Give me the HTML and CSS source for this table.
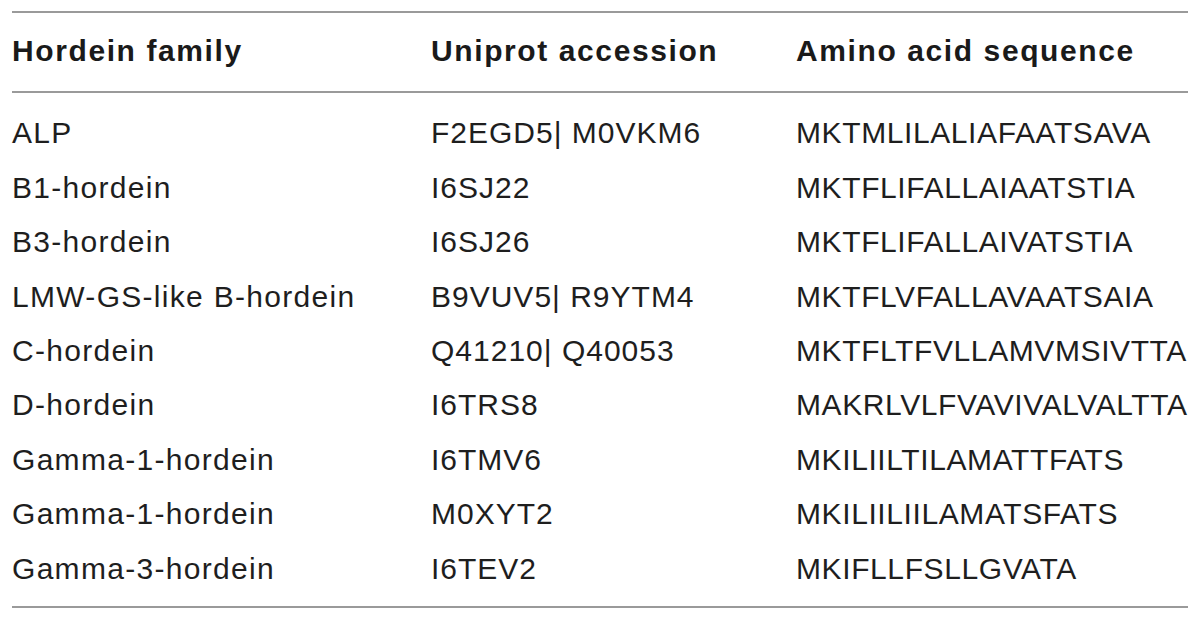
FILE: index.html
```html
<!DOCTYPE html>
<html lang="en">
<head>
<meta charset="utf-8">
<title>Hordein signal peptides</title>
<link rel="stylesheet" href="styles.css">
</head>
<body>
<table class="data">
  <colgroup>
    <col class="c1">
    <col class="c2">
    <col class="c3">
  </colgroup>
  <thead>
    <tr>
      <th>Hordein family</th>
      <th>Uniprot accession</th>
      <th>Amino acid sequence</th>
    </tr>
  </thead>
  <tbody>
    <tr><td>ALP</td><td>F2EGD5| M0VKM6</td><td>MKTMLILALIAFAATSAVA</td></tr>
    <tr><td>B1-hordein</td><td>I6SJ22</td><td>MKTFLIFALLAIAATSTIA</td></tr>
    <tr><td>B3-hordein</td><td>I6SJ26</td><td>MKTFLIFALLAIVATSTIA</td></tr>
    <tr><td>LMW-GS-like B-hordein</td><td>B9VUV5| R9YTM4</td><td>MKTFLVFALLAVAATSAIA</td></tr>
    <tr><td>C-hordein</td><td>Q41210| Q40053</td><td>MKTFLTFVLLAMVMSIVTTA</td></tr>
    <tr><td>D-hordein</td><td>I6TRS8</td><td>MAKRLVLFVAVIVALVALTTA</td></tr>
    <tr><td>Gamma-1-hordein</td><td>I6TMV6</td><td>MKILIILTILAMATTFATS</td></tr>
    <tr><td>Gamma-1-hordein</td><td>M0XYT2</td><td>MKILIILIILAMATSFATS</td></tr>
    <tr><td>Gamma-3-hordein</td><td>I6TEV2</td><td>MKIFLLFSLLGVATA</td></tr>
  </tbody>
</table>
</body>
</html>
```

FILE: styles.css
```css
html, body {
  margin: 0;
  padding: 0;
  background: #ffffff;
}

body {
  padding: 11px 12px 0 12px;
  font-family: "Liberation Sans", Arial, Helvetica, sans-serif;
  color: #1e1e1e;
}

.data {
  width: 1176px;
  border-collapse: collapse;
  table-layout: fixed;
  font-size: 30px;
  line-height: 54.4px;
}

.c1 { width: 419px; }
.c2 { width: 365px; }
.c3 { width: auto; }

.data th,
.data td {
  padding: 0;
  text-align: left;
  vertical-align: top;
  white-space: nowrap;
}

.data thead tr {
  border-top: 2px solid #9a9a9a;
  border-bottom: 2px solid #9a9a9a;
}

.data th {
  font-weight: bold;
  color: #1a1a1a;
  letter-spacing: 1.6px;
  padding-top: 11px;
  padding-bottom: 13px;
}

.data td {
  letter-spacing: 0.6px;
}

.data td:nth-child(1) {
  letter-spacing: 1.3px;
}

.data td:nth-child(2) {
  letter-spacing: 1px;
}

.data tbody tr:first-child td {
  padding-top: 13px;
}

.data tbody tr:last-child td {
  padding-bottom: 10px;
}

.data tbody {
  border-bottom: 2px solid #9a9a9a;
}
```
